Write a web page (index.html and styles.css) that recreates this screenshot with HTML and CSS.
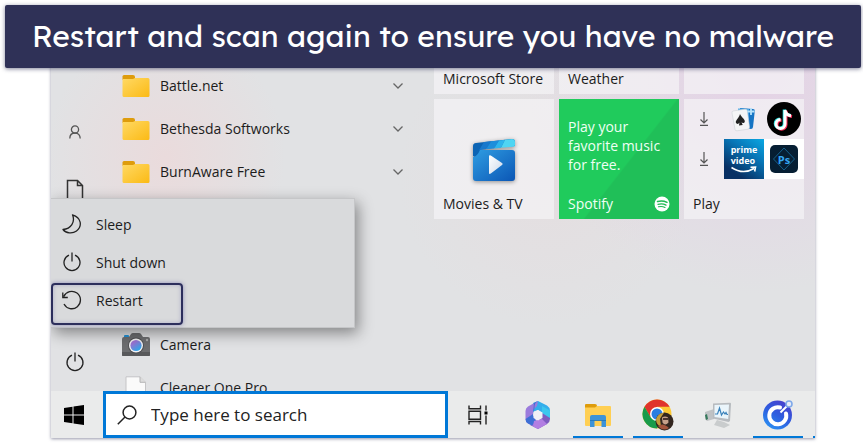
FILE: index.html
```html
<!DOCTYPE html>
<html lang="en">
<head>
  <meta charset="UTF-8">
  <meta name="viewport" content="width=device-width, initial-scale=1">
  <title>Restart and scan again</title>
  <link rel="stylesheet" href="styles.css">
</head>
<body>
  <svg class="defs" aria-hidden="true">
    <defs>
      <linearGradient id="folder-fill" x1="0" y1="0" x2="1" y2="1"><stop offset="0" stop-color="#ffd964"/><stop offset="1" stop-color="#fbba15"/></linearGradient>
      <symbol id="folder" viewBox="0 0 28 24">
        <path d="M0.500 6V2.500Q.5 1 2 1h9q2 0 2 2v3z" fill="#de9c0c"/>
        <path d="M.5 5H11l2-1h13q1.500 0 1.500 1.500v16q0 1.500-1.500 1.500H2Q.5 23 .5 21.500z" fill="url(#folder-fill)"/>
      </symbol>
      <symbol id="chevron" viewBox="0 0 12 8"><path d="M1.500 1.500 6 6l4.500-4.500" fill="none" stroke="#666" stroke-width="1.300"/></symbol>
      <symbol id="power" viewBox="0 0 20 20"><path d="M7 3.200a8 8 0 1 0 6 0M10 .5v9" fill="none" stroke="#222" stroke-width="1.300"/></symbol>
      <symbol id="download" viewBox="0 0 10 14"><path d="M5 0v11M1.500 7.500 5 11l3.500-3.500M1 13.300h8" fill="none" stroke="#555" stroke-width="1.200"/></symbol>
    </defs>
  </svg>

  <h1 class="banner">Restart and scan again to ensure you have no malware</h1>

  <main class="desktop">
    <section class="start">
      <nav class="rail">
        <button class="rail-btn" aria-label="Account">
          <svg width="12" height="14" viewBox="0 0 12 14" fill="none" stroke="#555" stroke-width="1.300"><circle cx="6" cy="4.500" r="3.600"/><path d="M.8 13.500C.8 10 3 8 6 8s5.200 2 5.200 5.500"/></svg>
        </button>
        <button class="rail-btn" aria-label="Documents">
          <svg width="18" height="22" viewBox="0 0 18 22" fill="none" stroke="#333" stroke-width="1.500"><path d="M1.500 1.500h10l5 5v14h-15zM11.500 1.500v5h5"/></svg>
        </button>
        <button class="rail-btn rail-power" aria-label="Power">
          <svg width="20" height="20"><use href="#power"/></svg>
        </button>
      </nav>

      <div class="apps">
        <button class="app"><svg width="28" height="24"><use href="#folder"/></svg><span>Battle.net</span><svg width="12" height="8"><use href="#chevron"/></svg></button>
        <button class="app"><svg width="28" height="24"><use href="#folder"/></svg><span>Bethesda Softworks</span><svg width="12" height="8"><use href="#chevron"/></svg></button>
        <button class="app"><svg width="28" height="24"><use href="#folder"/></svg><span>BurnAware Free</span><svg width="12" height="8"><use href="#chevron"/></svg></button>
        <button class="app app-after-menu">
          <svg width="28" height="24" viewBox="0 0 28 24">
            <defs><linearGradient id="lens" x1="0" y1="0" x2=".7" y2="1"><stop offset="0.300" stop-color="#9a72d2"/><stop offset="1" stop-color="#29a9ea"/></linearGradient></defs>
            <path d="M2 5V3q0-1 1-1h3q1 0 1 1v2z" fill="#2493d8"/>
            <path d="M0 6q0-2 2-2h5l2-3q.6-1 2-1h6q1.400 0 2 1l2 3h5q2 0 2 2v16q0 1-1 1H1q-1 0-1-1z" fill="#6d6e70"/>
            <path d="M0 19h28v3q0 1-1 1H1q-1 0-1-1z" fill="#58595b"/>
            <circle cx="14" cy="12.500" r="8" fill="#505153"/><circle cx="14" cy="12.500" r="7" fill="#f2f2f4"/><circle cx="14" cy="12.500" r="5.600" fill="url(#lens)"/><circle cx="25" cy="7" r="1.200" fill="#aaa"/>
          </svg>
          <span>Camera</span>
        </button>
        <button class="app">
          <svg width="28" height="24" viewBox="0 0 28 24"><path d="M4 .8h14l5.500 5.500V24H4z" fill="#fafafa" stroke="#c4c4c6"/><path d="M18 .8v5.500h5.500" fill="#ddd" stroke="#b4b4b6"/></svg>
          <span>Cleaner One Pro</span>
        </button>
      </div>

      <div class="tiles">
        <a class="tile" href="#">Microsoft Store</a>
        <a class="tile" href="#">Weather</a>
        <a class="tile" href="#" aria-label="Tile"></a>

        <a class="tile" href="#">
          <svg class="movies" width="46" height="46" viewBox="0 0 46 46">
            <defs>
              <linearGradient id="mv" x1="0" y1="0" x2="1" y2="1"><stop offset="0" stop-color="#2f9de2"/><stop offset="1" stop-color="#0b56b5"/></linearGradient>
              <linearGradient id="mv-play" x1="0" y1="0" x2="1" y2="1"><stop offset="0" stop-color="#fff"/><stop offset="1" stop-color="#ccd9ea"/></linearGradient>
            </defs>
            <path d="M2 9v10l4 2 4-9 34-3V5q0-3-3-3L5 6Q2 6.300 2 9z" fill="#0c64b4"/>
            <path d="m13 5 7-.8-5 8-7 1z" fill="#1878cc"/>
            <path d="m20 4.200 8-.8-5 8-8 .8z" fill="#1e8edb"/><path d="m28 3.400 6-.6-4 8-7 .6z" fill="#2eb5ed"/><path d="m34 2.800 7-.8q3 0 3 3v3q0 1.600-1.600 1.800L30 10.800z" fill="#4fd5f3"/>
            <path d="M2 20q4 0 7-7h32q3 0 3 3v25q0 3-3 3H5q-3 0-3-3z" fill="url(#mv)"/>
            <path d="M18 19.500q0-2 1.800-1L31 26q1.500 1 0 2l-11.200 8.500Q18 37.500 18 36z" fill="url(#mv-play)"/>
          </svg>
          <span class="tile-name">Movies &amp; TV</span>
        </a>

        <a class="tile tile-spotify" href="#">
          <span class="promo">Play your favorite music for free.</span>
          <span class="tile-name">Spotify
            <svg width="16" height="16" viewBox="0 0 16 16" fill="none" stroke="#1eb954" stroke-linecap="round"><circle cx="8" cy="8" r="7.500" fill="#fff" stroke="none"/><path d="M3.500 5.500q5-1.500 9.500.8" stroke-width="1.500"/><path d="M4 8.300q4.500-1.200 8 .8" stroke-width="1.300"/><path d="M4.500 10.800q3.500-1 6.500.7" stroke-width="1.100"/></svg>
          </span>
        </a>

        <a class="tile" href="#">
          <span class="mini-grid">
            <svg width="10" height="14"><use href="#download"/></svg>
            <svg width="26" height="26" viewBox="0 0 26 26">
              <path d="m9 2 13 1q2 .2 1.800 2L22 21q-.2 2-2 2l-8-1z" fill="#1674c4"/><path d="m7 2.500 11 .5-1 19H9z" fill="#4caae8"/>
              <path d="m2 5 12-1.800q2-.2 2.300 1.600L18.500 21q.2 2-1.500 2.200L6 24.800q-1.800.2-2-1.500L1 7q-.3-1.700 1-2z" fill="#f5f5f6" stroke="#cdd2d7" stroke-width=".6"/>
              <path d="M9 8c1 3 5 5 4.800 7.500-.3 2-2.600 2-3.300.8l1.200 2.700-3.700.6.500-3c-.8 1.600-3 1.800-3.600.2C4.200 14.300 8 12 9 8z" fill="#222"/>
              <path d="M20 2v7M16.500 5.500h7" stroke="#b5e2fb" stroke-width="1.800"/>
            </svg>
            <svg width="34" height="34" viewBox="0 0 34 34" fill="none" stroke-width="3">
              <circle cx="17" cy="17" r="17" fill="#000"/>
              <path d="M18 8v14a4.500 4.500 0 1 1-4.500-4.500M18 8q.5 5 6 5.800" stroke="#25e4e4" transform="translate(-.8 -.5)"/>
              <path d="M18 8v14a4.500 4.500 0 1 1-4.500-4.500M18 8q.5 5 6 5.800" stroke="#fb2b57" transform="translate(1 .8)"/>
              <path d="M18 8v14a4.500 4.500 0 1 1-4.500-4.500M18 8q.5 5 6 5.800" stroke="#fff"/>
            </svg>
            <svg width="10" height="14"><use href="#download"/></svg>
            <span class="prime"><b>prime<br>video</b>
              <svg width="28" height="7" viewBox="0 0 28 7" fill="none" stroke="#fff" stroke-width="1.600"><path d="M1.500 1.500Q13 9 24 2.500M20.500 1.200l5-.2-.8 4.500"/></svg>
            </span>
            <span class="ps"><span>
              <svg width="28" height="28" viewBox="0 0 28 28"><path d="m14 3 10.500 11L14 25 3.500 14z" fill="none" stroke="#145f8c"/></svg><b>Ps</b></span></span>
          </span>
          <span class="tile-name">Play</span>
        </a>
      </div>

      <div class="power-menu" role="menu">
        <button role="menuitem"><svg width="20" height="20" viewBox="0 0 20 20"><path d="M10.500.8C13.500 8 9 15 1 15.500c3 4 9.500 4.500 13.500 1.500 6-4.500 5-13.500-4-16.200z" fill="none" stroke="#222" stroke-width="1.300" stroke-linejoin="round"/></svg>Sleep</button>
        <button role="menuitem"><svg width="20" height="20"><use href="#power"/></svg>Shut down</button>
        <button role="menuitem" class="restart"><svg width="20" height="20" viewBox="0 0 20 20"><path d="M1.800 6.500A8.700 8.700 0 1 1 2 14M.8 2.500v5h5" fill="none" stroke="#222" stroke-width="1.300"/></svg>Restart</button>
      </div>
    </section>

    <footer class="taskbar">
      <button class="win" aria-label="Start">
        <svg width="20" height="20" viewBox="0 0 20 20"><path d="M0 3 8.500 1.800v7.700H0zM9.500 1.600 20 0v9.500H9.500zM0 10.500h8.500v7.700L0 17zM9.500 10.500H20V20L9.500 18.400z"/></svg>
      </button>
      <label class="search">
        <svg width="20" height="20" viewBox="0 0 20 20"><circle cx="12.500" cy="7.500" r="6.400" fill="none" stroke="#222" stroke-width="1.500"/><path d="M8 12 .8 19.200" stroke="#222" stroke-width="1.500"/></svg>
        <input type="text" placeholder="Type here to search" aria-label="Search">
      </label>
      <button class="task" aria-label="Task view">
        <svg width="20" height="20" viewBox="0 0 20 20" fill="none" stroke="#222" stroke-width="1.400"><path d="M1 .5v3.200h11.500V.5M1 6.200h11.500v8H1zM1 19.500v-3h11.500v3M18 .5v5M18 10.500v9"/><path d="M16.500 8h3" stroke="#000" stroke-width="3"/></svg>
      </button>
      <button class="task" aria-label="Microsoft 365">
        <svg width="28" height="28" viewBox="0 0 28 28">
          <path d="M9 2 14 0l9 4.500q3 2 3 5V17l-8-5-4-3-6 2z" fill="#34aeeb"/>
          <path d="M26 10v8q0 3-3 5l-9 5-8-4 6-4 6-4V12z" fill="#7e5bc0"/>
          <path d="M26 9.500V17l-8-5V5z" fill="#3cc6ee"/>
          <path d="M14 0 4 5.500Q1.500 7 1.500 10v8q0 3 2.500 4.500l5 2.500 3-6-3-4V9l4-4z" fill="#9b7bdc"/>
          <path d="M14 0q-4 2-3.500 7L9 14l3 6-4 4.500-4-2Q1.500 21 1.500 18L9 13l1-11z" fill="#3d6fd5"/>
          <path d="m10 20 8-2 5 5-9 5-5-2.500z" fill="#b27ee2"/>
          <path d="m14 9 4.500 2.500v5.500L14 19.500 9.500 17v-5.500z" fill="#f0f0f5"/>
        </svg>
      </button>
      <button class="task open" aria-label="File Explorer">
        <svg width="28" height="24" viewBox="0 0 28 24"><path d="M1 6V2q0-1 1-1h9q2 0 2 2v3z" fill="#de9c0c"/><path d="M1 4.500h10L13 3h13q1 0 1 1v18q0 1-1 1H2q-1 0-1-1z" fill="#ffcf53"/><path d="M6 24V14q0-2 2-2h12q2 0 2 2v10h-4.500v-6.500h-7V24z" fill="#3d93d8"/><path d="M6 17.500h16" stroke="#1e72b8" stroke-width=".8"/></svg>
      </button>
      <button class="task open" aria-label="Chrome">
        <svg width="32" height="32" viewBox="0 0 32 32">
          <circle cx="15" cy="15" r="14.500" fill="#fcc934"/>
          <path d="M2.500 7.700a14.500 14.500 0 0 1 25.100 0H15l-6.200 11z" fill="#e0342c"/>
          <path d="M2.500 7.700A14.500 14.500 0 0 0 15 29.500l6.200-11H8.800z" fill="#189b4a"/>
          <circle cx="15" cy="15" r="7" fill="#fff"/><circle cx="15" cy="15" r="5.500" fill="#2b7de0"/>
          <circle cx="22.500" cy="22.500" r="9" fill="#33261f"/><path d="M14 20q2-6 8-6.300l-4 6 1 8q-5-2-5-7.700z" fill="#c29b3a"/><path d="M20 18.500q3-2 6 0l.5 5q-3.500 4-6 0z" fill="#c7a18a"/><path d="M16 27q5-4 11 2-6 4-11-2z" fill="#a5553c"/><path d="M21 20h5" stroke="#211" stroke-width="1.500"/>
        </svg>
      </button>
      <button class="task" aria-label="Task Manager">
        <svg width="28" height="26" viewBox="0 0 28 26">
          <path d="m1 10 9-3v10l-7 2-2-2z" fill="#bfc2c4"/><path d="m1 13 2-1 1 5-2 1z" fill="#35795b"/>
          <path d="m13 18 7 2 6 3-6 3-10-3z" fill="#c9cccd"/>
          <path d="M9 1.500 26 .8q1 0 1 1L26 19l-1.500 1L9 16.500z" fill="#b7bbbf"/><path d="M10.500 3 25 2.500 24.200 17l-13.700-2z" fill="#eaf5fb"/>
          <path d="m11 12 2.500 0L15.500 6l2 7 2-3 1.500 2 1-1.500 1 2h1" fill="none" stroke="#3b83bb" stroke-width="1.200"/>
        </svg>
      </button>
      <button class="task open" aria-label="Scanner">
        <svg width="30" height="30" viewBox="0 0 30 30">
          <defs><linearGradient id="ring" x1=".2" y1="1" x2=".8" y2="0"><stop offset="0" stop-color="#2b93f3"/><stop offset=".5" stop-color="#2e5ddf"/><stop offset="1" stop-color="#4b3dcb"/></linearGradient></defs>
          <circle cx="14.500" cy="15" r="14.500" fill="url(#ring)"/>
          <path d="M17 7.500a8.500 8.500 0 1 0 6 6" fill="none" stroke="#fff" stroke-width="4" stroke-linecap="round"/><path d="m17.500 12.500 6-6" stroke="#fff" stroke-width="2"/>
          <circle cx="26" cy="4" r="3" fill="#e8edf8" stroke="#7fa9ea" stroke-width="1.600"/>
        </svg>
      </button>
      <button class="task open next" aria-label="More"></button>
    </footer>
  </main>
</body>
</html>
```
FILE: styles.css
```css
:root {
  --navy: #2f3157;
  --blue: #0078d7;
  --ui: "Open Sans", "Noto Sans", sans-serif;
}
*, *::before, *::after { box-sizing: border-box; }
body { margin: 0; padding: 5px 2px 5px 5px; background: #fff; font: 14px/19px var(--ui); color: #1c1c1c; overflow: hidden; }
button { padding: 0; border: 0; background: none; font: inherit; color: inherit; text-align: left; }
a { color: inherit; text-decoration: none; }
svg { display: block; flex: none; }
.defs { position: absolute; width: 0; height: 0; }

.banner { position: relative; z-index: 3; margin: 0; padding: 12px 24px 13px; border-radius: 2px; background: var(--navy); color: #fff;
  font: 30px/38px Lexend, Inter, sans-serif; text-align: center; white-space: nowrap; box-shadow: 0 1px 4px rgba(47,49,87,.6); }

.desktop { margin: -4px 46px 0 46px; overflow: hidden; box-shadow: 0 1px 3px rgba(47,49,87,.5);
  background:
    radial-gradient(circle at 92% 0, rgba(229,208,230,.9), rgba(229,208,230,0) 230px),
    radial-gradient(ellipse 120px 130px at 15% 25%, rgba(235,218,219,.9), rgba(235,218,219,0)),
    radial-gradient(circle at 65% 30%, rgba(232,218,220,.5), rgba(232,218,220,0) 150px),
    #e1e2e4; }

/* start menu */
.start { position: relative; display: grid; grid-template: 100% / 48px minmax(0, 1fr) 370px; height: 327px; padding-right: 11px; overflow: hidden; }
.rail { display: flex; flex-direction: column; padding: 39px 0 18px; }
.rail-btn { display: flex; align-items: center; justify-content: center; height: 58px; }
.rail-power { margin-top: auto; height: 22px; }

.apps { padding: 0 30px 0 23px; }
.app { display: grid; grid-template-columns: 28px 1fr 12px; gap: 10px; align-items: center; width: 100%; height: 43px; }
.app-after-menu { margin-top: 130px; }

.tiles { display: grid; grid-template-columns: repeat(3, 1fr); grid-template-rows: 30px 120px; gap: 5px; }
.tile { display: flex; flex-direction: column; justify-content: flex-end; padding: 5px 9px 6px; background: rgba(245,243,246,.7); white-space: nowrap; }
.tile-name { display: flex; align-items: center; justify-content: space-between; }
.movies { margin: 0 auto 11px; filter: drop-shadow(0 1px 2px rgba(0,0,0,.4)); }
.tile-spotify { justify-content: space-between; padding-top: 18px; background: linear-gradient(128deg, #20cb5c 55%, #20bf58 56%); color: #effff4; }
.promo { white-space: normal; }
.mini-grid { display: grid; grid-template-columns: 31px 40px 40px; grid-template-rows: 40px 40px; place-items: center; margin: -5px -9px auto 0; }
.mini-grid > :nth-child(3n+1) { justify-self: start; margin-left: 6px; }
.prime { display: flex; flex-direction: column; align-items: center; width: 40px; height: 40px; padding-top: 5px;
  background: linear-gradient(35deg, #083064 20%, #0777b8 65%, #0aa8e3); color: #fff; font-size: 9px; line-height: 11px; }
.ps { display: grid; place-items: center; width: 40px; height: 40px; background: #fff; }
.ps > span { display: grid; place-items: center; width: 28px; height: 28px; border-radius: 5px; background: #061e33; color: #33a5f5; font-size: 11px; }
.ps > span > * { grid-area: 1 / 1; }

.power-menu { position: absolute; left: 0; top: 134px; width: 304px; padding: 6px 0 8px; background: #d9dadc; border: 1px solid #c5c6c8; border-left: 0; box-shadow: 3px 5px 14px rgba(0,0,0,.42); }
.power-menu button { position: relative; display: flex; align-items: center; gap: 14px; width: 100%; height: 38px; padding-left: 11px; }
.power-menu .restart::after { content: ""; position: absolute; left: 0; top: 2px; width: 132px; height: 42px; border: 2px solid #2c2e5c; border-radius: 4px; box-shadow: 0 0 4px rgba(70,70,150,.5), inset 0 0 4px rgba(70,70,150,.3); }

/* taskbar */
.taskbar { display: flex; height: 47px; background: rgba(236,237,238,.75); }
.win { display: flex; flex: none; align-items: center; justify-content: center; width: 52px; padding-right: 6px; }
.search { display: flex; flex: 1; min-width: 0; align-items: center; gap: 14px; padding-left: 11px; border: 3px solid var(--blue); background: #fff; }
.search input { flex: 1; min-width: 0; border: 0; padding: 0; outline: 0; background: none; font: 17px/24px var(--ui); color: #222; }
.search input::placeholder { color: #222; opacity: 1; }
.task { position: relative; display: flex; flex: none; align-items: center; justify-content: center; width: 60px; overflow: hidden; }
.open::after { content: ""; position: absolute; left: 5px; right: 5px; bottom: 0; height: 2px; background: var(--blue); }
.next { width: 7px; }
.next::after { right: 0; }
```
